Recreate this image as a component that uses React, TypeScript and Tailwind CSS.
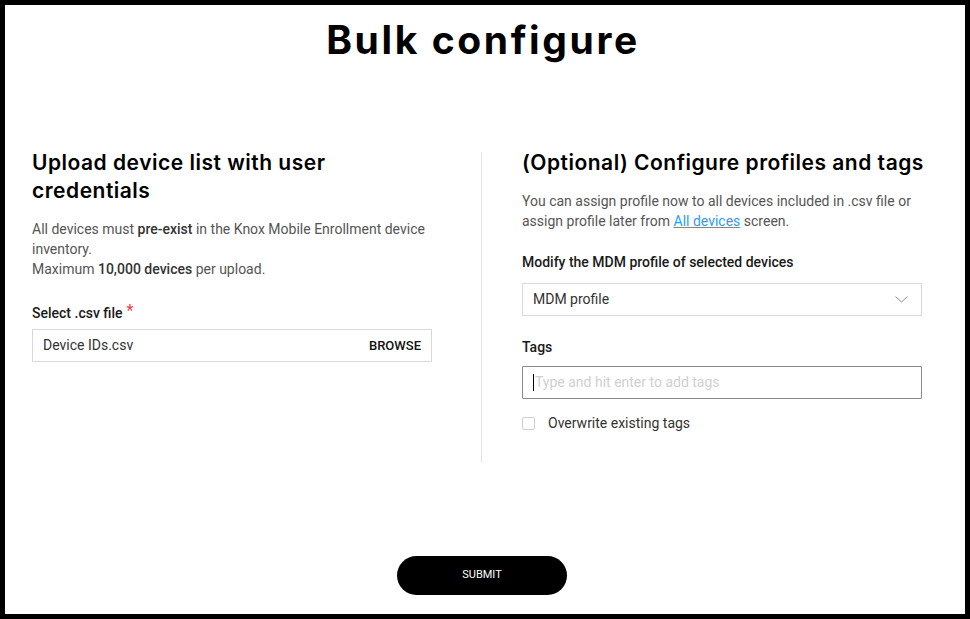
import { ChangeEvent, useState } from 'react'

const headingFont = "font-['Inter','Lato',sans-serif]"
const bodyFont = "font-['Roboto','Noto_Sans',sans-serif]"

const FieldLabel = ({ children }: { children: React.ReactNode }) => (
  <div className="text-[14px] leading-[20px] font-medium text-[#1a1a1a]">{children}</div>
)

const Chevron = () => (
  <svg width="13" height="7" viewBox="0 0 13 7" fill="none">
    <path d="M0.5 0.5L6.5 6L12.5 0.5" stroke="#8c8c8c" strokeWidth="1" />
  </svg>
)

const App: React.FC = () => {
  const [tags, setTags] = useState('')
  const [overwrite, setOverwrite] = useState(false)

  return (
    <div className={`w-[970px] h-[619px] border-[5px] border-black bg-white box-border ${bodyFont}`}>
      <h1
        className={`${headingFont} pt-[11px] pr-[4px] text-center text-[39px] leading-[48px] font-bold text-black tracking-[2.6px]`}
      >
        Bulk configure
      </h1>

      <div className="flex mt-[85px] pl-[27px]">
        <div className="w-[400px] shrink-0">
          <h2 className={`${headingFont} w-[330px] text-[21px] leading-[28px] font-semibold text-black tracking-[0.5px]`}>
            Upload device list with user credentials
          </h2>
          <p className="mt-[14px] text-[14px] leading-[20px] text-[#555]">
            All devices must <span className="font-medium text-[#333]">pre-exist</span> in the Knox Mobile
            Enrollment device inventory.
            <br />
            Maximum <span className="font-medium text-[#333]">10,000 devices</span> per upload.
          </p>
          <div className="mt-[24px] flex items-start">
            <FieldLabel>Select .csv file</FieldLabel>
            <span className="ml-[4px] -mt-[4px] text-[16px] text-[#f03c3c]">*</span>
          </div>
          <div className="mt-[6px] h-[33px] flex items-center justify-between border border-[#d9d9d9] px-[10px]">
            <span className="text-[14px] text-[#333]">Device IDs.csv</span>
            <span className="text-[13px] font-medium text-[#111]">BROWSE</span>
          </div>
        </div>

        <div className="ml-[49px] mr-[40px] mt-[3px] w-px h-[311px] bg-[#e6e6e6]" />

        <div className="w-[400px] shrink-0">
          <h2
            className={`${headingFont} text-[21px] leading-[28px] font-semibold text-black whitespace-nowrap tracking-[0.5px]`}
          >
            (Optional) Configure profiles and tags
          </h2>
          <p className="mt-[14px] text-[14px] leading-[20px] text-[#555]">
            You can assign profile now to all devices included in .csv file or assign profile later from{' '}
            <a href="#" className="text-[#2e9cf4] underline">
              All devices
            </a>{' '}
            screen.
          </p>
          <div className="mt-[21px]">
            <FieldLabel>Modify the MDM profile of selected devices</FieldLabel>
          </div>
          <div className="mt-[11px] h-[33px] flex items-center justify-between border border-[#d9d9d9] pl-[10px] pr-[13px]">
            <span className="text-[14px] text-[#333]">MDM profile</span>
            <Chevron />
          </div>
          <div className="mt-[21px]">
            <FieldLabel>Tags</FieldLabel>
          </div>
          <div className="relative mt-[9px] h-[33px] flex items-center border border-[#8a8a8a] rounded-[1px] px-[10px]">
            {tags === '' && (
              <span className="absolute left-[10px] top-[7px] w-px h-[17px] bg-black" />
            )}
            <input
              value={tags}
              onChange={(e: ChangeEvent<HTMLInputElement>) => setTags(e.target.value)}
              placeholder="Type and hit enter to add tags"
              className="w-full bg-transparent outline-none pl-[2px] text-[14px] text-[#333] placeholder:text-[#d0d0d0]"
            />
          </div>
          <label className="mt-[14px] flex items-center cursor-pointer">
            <span
              onClick={() => setOverwrite(!overwrite)}
              className={`w-[13px] h-[13px] border border-[#cfcfcf] rounded-[2px] ${overwrite ? 'bg-black' : 'bg-white'}`}
            />
            <span className="ml-[13px] text-[14px] leading-[20px] text-[#333]">Overwrite existing tags</span>
          </label>
        </div>
      </div>

      <div className="flex justify-center mt-[93px]">
        <button className="w-[170px] h-[39px] rounded-full bg-black text-white text-[11px] mr-[6px]">
          SUBMIT
        </button>
      </div>
    </div>
  )
}

export default App
